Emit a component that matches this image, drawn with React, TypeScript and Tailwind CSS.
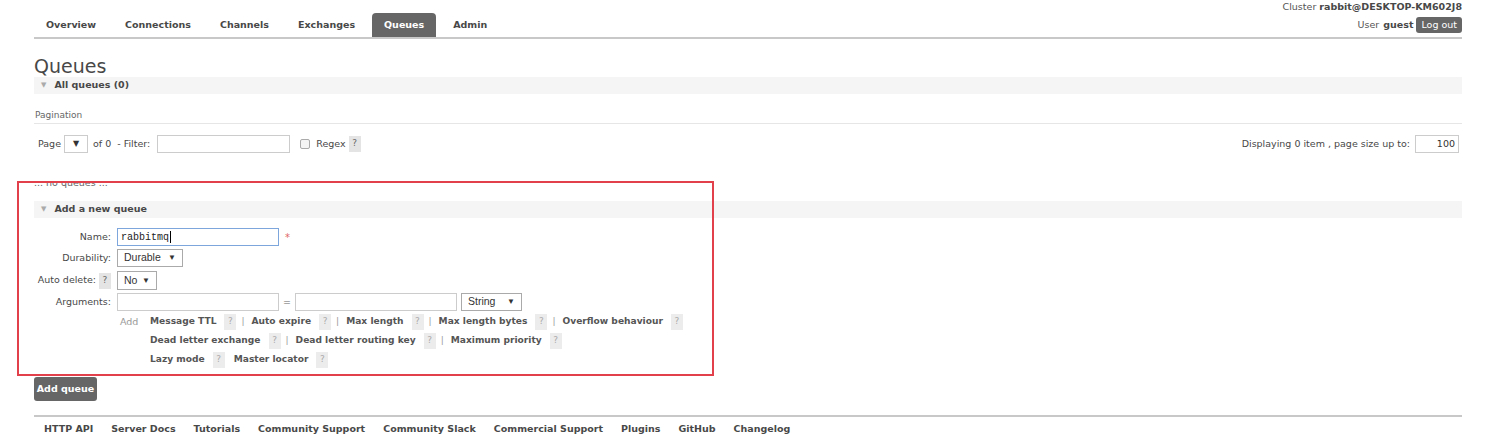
import React from 'react';

const tabs = ['Overview', 'Connections', 'Channels', 'Exchanges', 'Queues', 'Admin'];

const footerLinks = [
  'HTTP API',
  'Server Docs',
  'Tutorials',
  'Community Support',
  'Community Slack',
  'Commercial Support',
  'Plugins',
  'GitHub',
  'Changelog',
];

function Help({ light }: { light?: boolean }) {
  return (
    <span
      className={
        light
          ? 'inline-flex h-[16px] w-[12px] items-center justify-center bg-[#ececec] text-[9px] font-normal text-[#aaa]'
          : 'inline-flex h-[16px] w-[12px] items-center justify-center bg-[#e4e4e4] text-[9px] font-normal text-[#666]'
      }
    >
      ?
    </span>
  );
}

function Caret() {
  return <span className="text-[8px] text-[#333]">▼</span>;
}

function Section({ title }: { title: string }) {
  return (
    <div className="flex h-[17px] items-center bg-[#f5f5f5] pl-[7px] text-[9.5px] font-bold text-[#484848]">
      <span className="mr-[8px] text-[7px] text-[#aaa]">▼</span>
      {title}
    </div>
  );
}

function ArgLink({ label, sep = true }: { label: string; sep?: boolean }) {
  return (
    <span className="flex items-center">
      <span className="font-bold text-[#555]">{label}</span>
      <span className="ml-[8px]">
        <Help light />
      </span>
      {sep ? <span className="ml-[5px] mr-[7px] font-normal text-[#999]">|</span> : <span className="w-[9px]" />}
    </span>
  );
}

export default function App() {
  return (
    <div
      className="relative h-[440px] w-[1500px] overflow-hidden bg-white text-[9.5px] text-[#484848]"
      style={{ fontFamily: '"DejaVu Sans", Verdana, sans-serif' }}
    >
      <div className="ml-[34px] w-[1428px]">
        {/* header */}
        <div className="flex h-[39px] items-end justify-between border-b-2 border-[#c8c8c8]">
          <ul className="flex items-end">
            {tabs.map((t) => (
              <li
                key={t}
                className={
                  t === 'Queues'
                    ? 'mr-[5px] flex h-[24px] items-center rounded-t-[4px] bg-[#666] px-[12px] font-bold text-white'
                    : 'mr-[5px] flex h-[24px] items-center px-[12px] font-bold text-[#484848]'
                }
              >
                {t}
              </li>
            ))}
          </ul>
          <div className="flex flex-col items-end pb-[4px]">
            <div className="leading-[14px] text-[#555]">
              Cluster <b className="text-[#484848]">rabbit@DESKTOP-KM602J8</b>
            </div>
            <div className="mt-[3px] flex items-center text-[#555]">
              User <b className="ml-[4px] text-[#484848]">guest</b>
              <span className="ml-[3px] flex h-[16px] items-center rounded-[3px] bg-[#666] px-[5px] text-white">
                Log out
              </span>
            </div>
          </div>
        </div>

        <h1 className="mt-[16px] text-[19px] leading-[22px] text-[#484848]">Queues</h1>
        <Section title="All queues (0)" />

        <div className="mt-[15px] border-b border-[#e6e6e6] pb-[2px] pl-[1px] text-[9px] leading-[12px] text-[#666]">
          Pagination
        </div>

        <div className="mt-[11px] flex h-[18px] items-center justify-between">
          <div className="flex items-center">
            <span className="ml-[4px]">Page</span>
            <span className="ml-[3px] flex h-[18px] w-[24px] items-center justify-center border border-[#ccc] bg-white">
              <Caret />
            </span>
            <span className="ml-[5px]">of 0 &nbsp;- Filter:</span>
            <span className="ml-[7px] h-[18px] w-[133px] border border-[#ccc]" />
            <span className="ml-[10px] h-[10px] w-[10px] rounded-[2px] border border-[#aaa] bg-[#f4f4f4]" />
            <span className="ml-[6px]">Regex</span>
            <span className="ml-[3px]">
              <Help />
            </span>
          </div>
          <div className="mr-[3px] flex items-center">
            <span>Displaying 0 item , page size up to:</span>
            <span className="ml-[5px] flex h-[18px] w-[44px] items-center justify-end border border-[#ccc] pr-[3px] text-[#333]">
              100
            </span>
          </div>
        </div>

        <div className="mt-[24px] text-[9.5px] leading-[12px] text-[#666]">... no queues ...</div>

        <div className="mt-[12px]">
          <Section title="Add a new queue" />
        </div>

        {/* form */}
        <div className="mt-[10px] flex flex-col">
          <div className="flex h-[18px] items-center">
            <span className="w-[77px] text-right">Name:</span>
            <span
              className="ml-[6px] flex h-[18px] w-[162px] items-center border border-[#7da6dd] pl-[3px] text-[10px] text-[#222]"
              style={{ fontFamily: '"Liberation Mono", monospace' }}
            >
              rabbitmq<span className="ml-[1px] h-[12px] w-[1px] bg-black" />
            </span>
            <span className="ml-[6px] text-[10px] text-[#e06666]">*</span>
          </div>
          <div className="mt-[3px] flex h-[18px] items-center">
            <span className="w-[77px] text-right">Durability:</span>
            <span
              className="ml-[6px] flex h-[18px] w-[66px] items-center justify-between border border-[#aaa] px-[6px] text-[10.5px] text-[#333]"
              style={{ fontFamily: '"Liberation Sans", Arial, sans-serif' }}
            >
              Durable <Caret />
            </span>
          </div>
          <div className="mt-[4px] flex h-[19px] items-center">
            <span className="flex w-[77px] items-center justify-end">
              Auto delete:
              <span className="ml-[3px]">
                <Help />
              </span>
            </span>
            <span
              className="ml-[6px] flex h-[19px] w-[40px] items-center justify-between border border-[#aaa] px-[6px] text-[10.5px] text-[#333]"
              style={{ fontFamily: '"Liberation Sans", Arial, sans-serif' }}
            >
              No <Caret />
            </span>
          </div>
          <div className="mt-[3px] flex h-[18px] items-center">
            <span className="w-[77px] text-right">Arguments:</span>
            <span className="ml-[6px] h-[18px] w-[162px] border border-[#ccc]" />
            <span className="mx-[4px] text-[#666]">=</span>
            <span className="h-[18px] w-[162px] border border-[#ccc]" />
            <span
              className="ml-[4px] flex h-[18px] w-[61px] items-center justify-between border border-[#aaa] px-[6px] text-[10.5px] text-[#333]"
              style={{ fontFamily: '"Liberation Sans", Arial, sans-serif' }}
            >
              String <Caret />
            </span>
          </div>
        </div>

        <div className="ml-[86px] mt-[3px] flex text-[9.1px]">
          <span className="mt-[1px] w-[30px] text-[9.5px] text-[#999]">Add</span>
          <div className="flex flex-col gap-[3px]">
            <div className="flex h-[16px] items-center">
              <ArgLink label="Message TTL" />
              <ArgLink label="Auto expire" />
              <ArgLink label="Max length" />
              <ArgLink label="Max length bytes" />
              <ArgLink label="Overflow behaviour" sep={false} />
            </div>
            <div className="flex h-[16px] items-center">
              <ArgLink label="Dead letter exchange" />
              <ArgLink label="Dead letter routing key" />
              <ArgLink label="Maximum priority" sep={false} />
            </div>
            <div className="flex h-[16px] items-center">
              <ArgLink label="Lazy mode" sep={false} />
              <ArgLink label="Master locator" sep={false} />
            </div>
          </div>
        </div>

        <div className="mt-[9px] flex h-[24px] w-[63px] items-center justify-center rounded-[3px] bg-[#666] font-bold text-white">
          Add queue
        </div>

        <div className="mt-[14px] flex h-[27px] items-center border-t-2 border-[#c8c8c8] pl-[10px]">
          {footerLinks.map((l) => (
            <span key={l} className="mr-[18px] font-bold text-[#484848]">
              {l}
            </span>
          ))}
        </div>
      </div>

      {/* annotation box */}
      <div className="pointer-events-none absolute left-[17px] top-[181px] h-[195px] w-[697px] border-2 border-[#e2404a]" />
    </div>
  );
}
